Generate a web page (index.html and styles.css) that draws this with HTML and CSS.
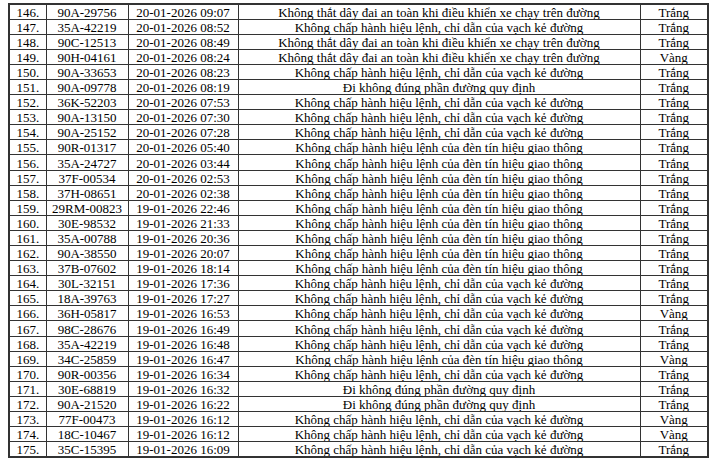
FILE: index.html
```html
<!DOCTYPE html>
<html lang="vi">
<head>
<meta charset="utf-8">
<link rel="stylesheet" href="styles.css">
</head>
<body>
<table class="tbl">
<colgroup><col class="c1"><col class="c2"><col class="c3"><col class="c4"><col class="c5"></colgroup>
<tbody>
<tr><td>146.</td><td>90A-29756</td><td>20-01-2026 09:07</td><td>Không thắt dây đai an toàn khi điều khiển xe chạy trên đường</td><td>Trắng</td></tr>
<tr><td>147.</td><td>35A-42219</td><td>20-01-2026 08:52</td><td>Không chấp hành hiệu lệnh, chỉ dẫn của vạch kẻ đường</td><td>Trắng</td></tr>
<tr><td>148.</td><td>90C-12513</td><td>20-01-2026 08:49</td><td>Không thắt dây đai an toàn khi điều khiển xe chạy trên đường</td><td>Trắng</td></tr>
<tr><td>149.</td><td>90H-04161</td><td>20-01-2026 08:24</td><td>Không thắt dây đai an toàn khi điều khiển xe chạy trên đường</td><td>Vàng</td></tr>
<tr><td>150.</td><td>90A-33653</td><td>20-01-2026 08:23</td><td>Không chấp hành hiệu lệnh, chỉ dẫn của vạch kẻ đường</td><td>Trắng</td></tr>
<tr><td>151.</td><td>90A-09778</td><td>20-01-2026 08:19</td><td>Đi không đúng phần đường quy định</td><td>Trắng</td></tr>
<tr><td>152.</td><td>36K-52203</td><td>20-01-2026 07:53</td><td>Không chấp hành hiệu lệnh, chỉ dẫn của vạch kẻ đường</td><td>Trắng</td></tr>
<tr><td>153.</td><td>90A-13150</td><td>20-01-2026 07:30</td><td>Không chấp hành hiệu lệnh, chỉ dẫn của vạch kẻ đường</td><td>Trắng</td></tr>
<tr><td>154.</td><td>90A-25152</td><td>20-01-2026 07:28</td><td>Không chấp hành hiệu lệnh, chỉ dẫn của vạch kẻ đường</td><td>Trắng</td></tr>
<tr><td>155.</td><td>90R-01317</td><td>20-01-2026 05:40</td><td>Không chấp hành hiệu lệnh của đèn tín hiệu giao thông</td><td>Trắng</td></tr>
<tr><td>156.</td><td>35A-24727</td><td>20-01-2026 03:44</td><td>Không chấp hành hiệu lệnh của đèn tín hiệu giao thông</td><td>Trắng</td></tr>
<tr><td>157.</td><td>37F-00534</td><td>20-01-2026 02:53</td><td>Không chấp hành hiệu lệnh của đèn tín hiệu giao thông</td><td>Trắng</td></tr>
<tr><td>158.</td><td>37H-08651</td><td>20-01-2026 02:38</td><td>Không chấp hành hiệu lệnh của đèn tín hiệu giao thông</td><td>Trắng</td></tr>
<tr><td>159.</td><td>29RM-00823</td><td>19-01-2026 22:46</td><td>Không chấp hành hiệu lệnh của đèn tín hiệu giao thông</td><td>Trắng</td></tr>
<tr><td>160.</td><td>30E-98532</td><td>19-01-2026 21:33</td><td>Không chấp hành hiệu lệnh của đèn tín hiệu giao thông</td><td>Trắng</td></tr>
<tr><td>161.</td><td>35A-00788</td><td>19-01-2026 20:36</td><td>Không chấp hành hiệu lệnh của đèn tín hiệu giao thông</td><td>Trắng</td></tr>
<tr><td>162.</td><td>90A-38550</td><td>19-01-2026 20:07</td><td>Không chấp hành hiệu lệnh của đèn tín hiệu giao thông</td><td>Trắng</td></tr>
<tr><td>163.</td><td>37B-07602</td><td>19-01-2026 18:14</td><td>Không chấp hành hiệu lệnh của đèn tín hiệu giao thông</td><td>Trắng</td></tr>
<tr><td>164.</td><td>30L-32151</td><td>19-01-2026 17:36</td><td>Không chấp hành hiệu lệnh, chỉ dẫn của vạch kẻ đường</td><td>Trắng</td></tr>
<tr><td>165.</td><td>18A-39763</td><td>19-01-2026 17:27</td><td>Không chấp hành hiệu lệnh, chỉ dẫn của vạch kẻ đường</td><td>Trắng</td></tr>
<tr><td>166.</td><td>36H-05817</td><td>19-01-2026 16:53</td><td>Không chấp hành hiệu lệnh, chỉ dẫn của vạch kẻ đường</td><td>Vàng</td></tr>
<tr><td>167.</td><td>98C-28676</td><td>19-01-2026 16:49</td><td>Không chấp hành hiệu lệnh, chỉ dẫn của vạch kẻ đường</td><td>Trắng</td></tr>
<tr><td>168.</td><td>35A-42219</td><td>19-01-2026 16:48</td><td>Không chấp hành hiệu lệnh, chỉ dẫn của vạch kẻ đường</td><td>Trắng</td></tr>
<tr><td>169.</td><td>34C-25859</td><td>19-01-2026 16:47</td><td>Không chấp hành hiệu lệnh của đèn tín hiệu giao thông</td><td>Vàng</td></tr>
<tr><td>170.</td><td>90R-00356</td><td>19-01-2026 16:34</td><td>Không chấp hành hiệu lệnh, chỉ dẫn của vạch kẻ đường</td><td>Trắng</td></tr>
<tr><td>171.</td><td>30E-68819</td><td>19-01-2026 16:32</td><td>Đi không đúng phần đường quy định</td><td>Trắng</td></tr>
<tr><td>172.</td><td>90A-21520</td><td>19-01-2026 16:22</td><td>Đi không đúng phần đường quy định</td><td>Trắng</td></tr>
<tr><td>173.</td><td>77F-00473</td><td>19-01-2026 16:12</td><td>Không chấp hành hiệu lệnh, chỉ dẫn của vạch kẻ đường</td><td>Vàng</td></tr>
<tr><td>174.</td><td>18C-10467</td><td>19-01-2026 16:12</td><td>Không chấp hành hiệu lệnh, chỉ dẫn của vạch kẻ đường</td><td>Vàng</td></tr>
<tr><td>175.</td><td>35C-15395</td><td>19-01-2026 16:09</td><td>Không chấp hành hiệu lệnh, chỉ dẫn của vạch kẻ đường</td><td>Trắng</td></tr>
</tbody>
</table>
</body>
</html>
```
FILE: styles.css
```css
html, body {
  margin: 0;
  padding: 0;
  background: #fff;
}
body {
  padding: 3px 0 0 8px;
  font-family: "Liberation Serif", "Times New Roman", serif;
  font-size: 13px;
  color: #000;
}
.tbl {
  border-collapse: collapse;
  table-layout: fixed;
  width: 700px;
  border: 2px solid #333;
}
.c1 { width: 37px; }
.c2 { width: 82px; }
.c3 { width: 110px; }
.c4 { width: 402px; }
.c5 { width: 68px; }
.tbl tr {
  height: 15.1px;
}
.tbl td {
  border: 1px solid #333;
  padding: 0 2px;
  text-align: center;
  vertical-align: bottom;
  line-height: 13px;
  white-space: nowrap;
  overflow: hidden;
}
```
